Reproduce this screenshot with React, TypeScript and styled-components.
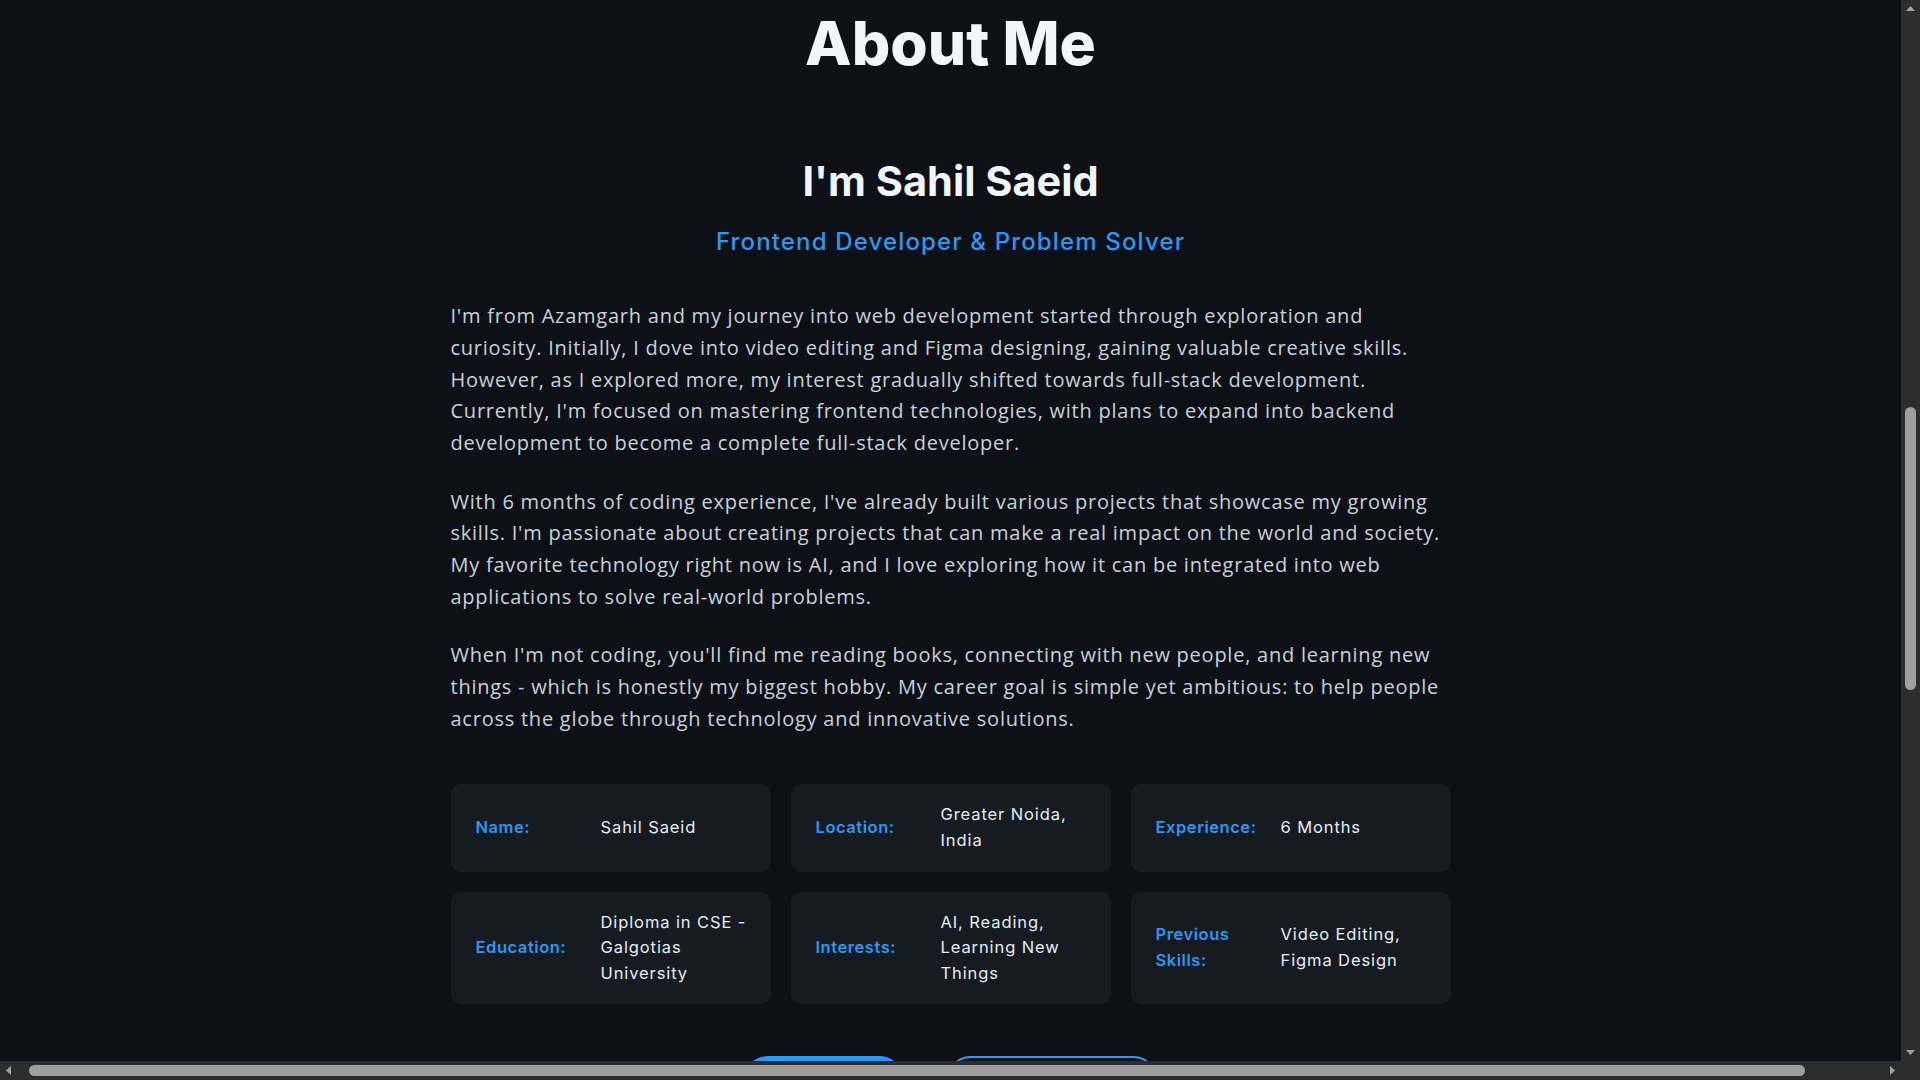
import React, { useEffect, useRef } from 'react';
import styled, { createGlobalStyle } from 'styled-components';

const GlobalStyle = createGlobalStyle`
  * { box-sizing: border-box; }
  body {
    margin: 0;
    background: #0d1117;
    color: #c9d1d9;
    font-family: Inter, "Open Sans", sans-serif;
  }
`;

const Frame = styled.div`
  display: grid;
  grid-template-columns: 1fr 19px;
  grid-template-rows: 1fr 19px;
  height: 100vh;
  overflow: hidden;
  background: #0d1117;
`;

const ScrollArea = styled.div`
  min-width: 0;
  min-height: 0;
  overflow: hidden;
`;

const VBar = styled.div`
  display: flex;
  flex-direction: column;
  background: #2d2d2d;
`;

const HBar = styled.div`
  display: flex;
  background: #2d2d2d;
`;

const Corner = styled.div`
  background: #2d2d2d;
`;

const Arrow = styled.div`
  flex: 0 0 17px;
  display: flex;
  align-items: center;
  justify-content: center;
  color: #a3a3a3;
`;

const VTrack = styled.div`
  flex: 1;
  display: flex;
  flex-direction: column;
  align-items: center;
`;

const HTrack = styled.div`
  flex: 1;
  display: flex;
  align-items: center;
`;

const VThumb = styled.div<{ $offset: number; $size: number }>`
  margin-top: ${(p) => p.$offset}px;
  height: ${(p) => p.$size}px;
  width: 11px;
  border-radius: 6px;
  background: #9f9f9f;
`;

const HThumb = styled.div<{ $offset: number; $size: number }>`
  margin-left: ${(p) => p.$offset}px;
  width: ${(p) => p.$size}px;
  height: 11px;
  border-radius: 6px;
  background: #9f9f9f;
`;

const Hero = styled.section`
  height: 1402px;
  display: flex;
  flex-direction: column;
  align-items: center;
  justify-content: center;
  gap: 16px;
`;

const HeroTitle = styled.h1`
  margin: 0;
  font-size: 64px;
  font-weight: 800;
  color: #f0f6fc;
`;

const HeroText = styled.p`
  margin: 0;
  font-size: 20px;
  color: #8b949e;
`;

const AboutSection = styled.section`
  padding: 80px 0 80px;
`;

const Container = styled.div`
  max-width: 1000px;
  margin: 0 auto;
`;

const SectionTitle = styled.h2`
  margin: 0;
  text-align: center;
  font-size: 60.5px;
  line-height: 1.2;
  font-weight: 800;
  color: #f0f6fc;
`;

const Name = styled.h3`
  margin: 77px 0 0;
  text-align: center;
  font-size: 41.5px;
  line-height: 1.2;
  font-weight: 700;
  color: #f0f6fc;
`;

const Role = styled.p`
  margin: 21.5px 0 0;
  text-align: center;
  font-size: 24px;
  line-height: 1.2;
  font-weight: 500;
  letter-spacing: 1.15px;
  color: #2f97ef;
`;

const Bio = styled.div`
  margin-top: 43.5px;
  display: flex;
  flex-direction: column;
  gap: 27px;
`;

const Paragraph = styled.p`
  margin: 0;
  font-family: "Open Sans", Inter, sans-serif;
  font-size: 20px;
  line-height: 31.68px;
  letter-spacing: 0.76px;
  color: #c9d1d9;
`;

const InfoGrid = styled.div`
  margin-top: 50px;
  display: grid;
  grid-template-columns: repeat(3, 1fr);
  gap: 20px;
`;

const InfoCard = styled.div`
  display: flex;
  align-items: center;
  gap: 15px;
  padding: 18px 23px 18px 25px;
  border-radius: 10px;
  background: #161b22;
`;

const Label = styled.span`
  flex: 0 0 110px;
  font-size: 16.5px;
  line-height: 25.6px;
  font-weight: 600;
  letter-spacing: 0.55px;
  color: #2f97ef;
`;

const Value = styled.span`
  flex: 1;
  font-size: 16.5px;
  line-height: 25.6px;
  letter-spacing: 0.9px;
  color: #e6edf3;
`;

const Actions = styled.div`
  margin-top: 52px;
  display: flex;
  justify-content: center;
  gap: 42px;
`;

const Button = styled.a<{ $outline?: boolean }>`
  display: inline-flex;
  align-items: center;
  justify-content: center;
  height: 50px;
  padding: 0 26px;
  border-radius: 30px;
  font-size: 16px;
  font-weight: 600;
  text-decoration: none;
  border: 2px solid #2f97ef;
  background: ${(p) => (p.$outline ? 'transparent' : '#2f97ef')};
  color: ${(p) => (p.$outline ? '#2f97ef' : '#ffffff')};
`;

const Projects = styled.section`
  min-height: 1265px;
  padding: 80px 0;
`;

const info = [
  { label: 'Name:', value: 'Sahil Saeid' },
  { label: 'Location:', value: 'Greater Noida, India' },
  { label: 'Experience:', value: '6 Months' },
  { label: 'Education:', value: 'Diploma in CSE - Galgotias University' },
  { label: 'Interests:', value: 'AI, Reading, Learning New Things' },
  { label: 'Previous Skills:', value: 'Video Editing, Figma Design' },
];

const UpArrow = () => (
  <svg width="9" height="5" viewBox="0 0 9 5">
    <path d="M0 5 L4.5 0 L9 5 Z" fill="currentColor" />
  </svg>
);
const DownArrow = () => (
  <svg width="9" height="5" viewBox="0 0 9 5">
    <path d="M0 0 L9 0 L4.5 5 Z" fill="currentColor" />
  </svg>
);
const LeftArrow = () => (
  <svg width="5" height="9" viewBox="0 0 5 9">
    <path d="M5 0 L5 9 L0 4.5 Z" fill="currentColor" />
  </svg>
);
const RightArrow = () => (
  <svg width="5" height="9" viewBox="0 0 5 9">
    <path d="M0 0 L5 4.5 L0 9 Z" fill="currentColor" />
  </svg>
);

export default function App() {
  const areaRef = useRef<HTMLDivElement>(null);
  const titleRef = useRef<HTMLHeadingElement>(null);

  useEffect(() => {
    const area = areaRef.current;
    const el = titleRef.current;
    if (area && el) {
      const offset = el.getBoundingClientRect().top - area.getBoundingClientRect().top + area.scrollTop;
      area.scrollTop = offset - 7;
    }
  }, []);

  return (
    <>
      <GlobalStyle />
      <Frame>
        <ScrollArea ref={areaRef}>
          <Hero>
            <HeroTitle>Sahil Saeid</HeroTitle>
            <HeroText>Frontend Developer</HeroText>
          </Hero>
          <AboutSection id="about">
            <Container>
              <SectionTitle ref={titleRef}>About Me</SectionTitle>
              <Name>I'm Sahil Saeid</Name>
              <Role>Frontend Developer &amp; Problem Solver</Role>
              <Bio>
                <Paragraph>
                  I'm from Azamgarh and my journey into web development started through exploration and curiosity. Initially, I dove into video editing and Figma designing, gaining valuable creative skills. However, as I explored more, my interest gradually shifted towards full-stack development. Currently, I'm focused on mastering frontend technologies, with plans to expand into backend development to become a complete full-stack developer.
                </Paragraph>
                <Paragraph>
                  With 6 months of coding experience, I've already built various projects that showcase my growing skills. I'm passionate about creating projects that can make a real impact on the world and society. My favorite technology right now is AI, and I love exploring how it can be integrated into web applications to solve real-world problems.
                </Paragraph>
                <Paragraph>
                  When I'm not coding, you'll find me reading books, connecting with new people, and learning new things - which is honestly my biggest hobby. My career goal is simple yet ambitious: to help people across the globe through technology and innovative solutions.
                </Paragraph>
              </Bio>
              <InfoGrid>
                {info.map((item) => (
                  <InfoCard key={item.label}>
                    <Label>{item.label}</Label>
                    <Value>{item.value}</Value>
                  </InfoCard>
                ))}
              </InfoGrid>
              <Actions>
                <Button href="#">Download CV</Button>
                <Button href="#" $outline>
                  Let's Work Together
                </Button>
              </Actions>
            </Container>
          </AboutSection>
          <Projects id="projects">
            <Container>
              <SectionTitle>My Projects</SectionTitle>
            </Container>
          </Projects>
        </ScrollArea>
        <VBar>
          <Arrow>
            <UpArrow />
          </Arrow>
          <VTrack>
            <VThumb $offset={390} $size={283} />
          </VTrack>
          <Arrow>
            <DownArrow />
          </Arrow>
        </VBar>
        <HBar>
          <Arrow>
            <LeftArrow />
          </Arrow>
          <HTrack>
            <HThumb $offset={12} $size={1776} />
          </HTrack>
          <Arrow>
            <RightArrow />
          </Arrow>
        </HBar>
        <Corner />
      </Frame>
    </>
  );
}
